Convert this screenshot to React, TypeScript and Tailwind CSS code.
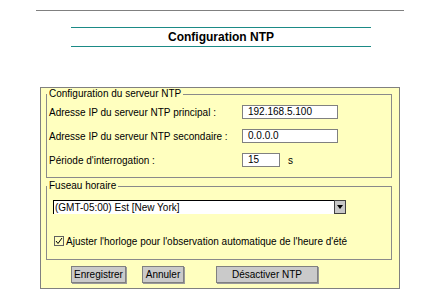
import React from "react";

const font = { fontFamily: '"Liberation Sans", Arial, sans-serif' };

function Row({ label, children }: { label: string; children: React.ReactNode }) {
  return (
    <div className="flex h-[24px] items-center pl-[2px]">
      <span className="w-[193px] shrink-0">{label}</span>
      {children}
    </div>
  );
}

function Field({ value, width }: { value: string; width: string }) {
  return (
    <div className={`${width} flex h-[14px] items-center border border-[#808080] bg-white pl-[5px] leading-none`}>
      {value}
    </div>
  );
}

function Button({ label, width }: { label: string; width: string }) {
  return (
    <button
      className={`${width} h-[17px] border border-[#808080] bg-[#cacaca] text-[10px] leading-none text-black shadow-[1px_1px_0_#9a9a9a]`}
    >
      {label}
    </button>
  );
}

export default function App() {
  return (
    <div className="h-[300px] w-[440px] overflow-hidden bg-white text-[10px] text-black" style={font}>
      <div className="mx-[36px] mt-[10px] h-px bg-[#808080]" />

      <div className="ml-[71px] mt-[16px] flex h-[20px] w-[300px] items-center justify-center border-y border-[#1b8a86]">
        <h1 className="text-[12px] font-bold leading-none">Configuration NTP</h1>
      </div>

      <div className="ml-[40px] mt-[40px] w-[360px] border border-[#808080] bg-[#ffffbf]">
        <fieldset className="ml-[5px] w-[346px] border border-[#8a8a8a] pb-[5px]">
          <legend className="px-[2px] leading-[12px]">Configuration du serveur NTP</legend>
          <Row label="Adresse IP du serveur NTP principal :">
            <Field value="192.168.5.100" width="w-[96px]" />
          </Row>
          <Row label="Adresse IP du serveur NTP secondaire :">
            <Field value="0.0.0.0" width="w-[96px]" />
          </Row>
          <Row label="Période d'interrogation :">
            <Field value="15" width="w-[38px]" />
            <span className="ml-[8px]">s</span>
          </Row>
        </fieldset>

        <fieldset className="ml-[5px] mt-[2px] w-[346px] border border-[#8a8a8a] pb-[12px]">
          <legend className="px-[2px] leading-[12px]">Fuseau horaire</legend>
          <div className="ml-[6px] mt-[8px] flex h-[14px] w-[293px]">
            <div className="flex flex-1 items-center border-l border-t border-black bg-white pl-[1px] leading-none">
              (GMT-05:00) Est [New York]
            </div>
            <div className="flex w-[12px] items-center justify-center border border-[#404040] bg-[#c8c8c8]">
              <svg width="6" height="4" viewBox="0 0 6 4">
                <path d="M0 0H6L3 4Z" fill="#000" />
              </svg>
            </div>
          </div>
          <div className="ml-[7px] mt-[21px] flex h-[12px] items-center">
            <div className="flex h-[10px] w-[10px] items-center justify-center border border-[#606060] bg-[#ffffbf]">
              <svg width="8" height="8" viewBox="0 0 8 8">
                <path d="M1 4L3 6.5L7 1" fill="none" stroke="#000" strokeWidth="1" />
              </svg>
            </div>
            <span className="ml-[2px]">Ajuster l'horloge pour l'observation automatique de l'heure d'été</span>
          </div>
        </fieldset>

        <div className="mb-[5px] mt-[6px] flex pl-[30px]">
          <Button label="Enregistrer" width="w-[55px]" />
          <div className="ml-[16px]">
            <Button label="Annuler" width="w-[42px]" />
          </div>
          <div className="ml-[32px]">
            <Button label="Désactiver  NTP" width="w-[102px]" />
          </div>
        </div>
      </div>
    </div>
  );
}
